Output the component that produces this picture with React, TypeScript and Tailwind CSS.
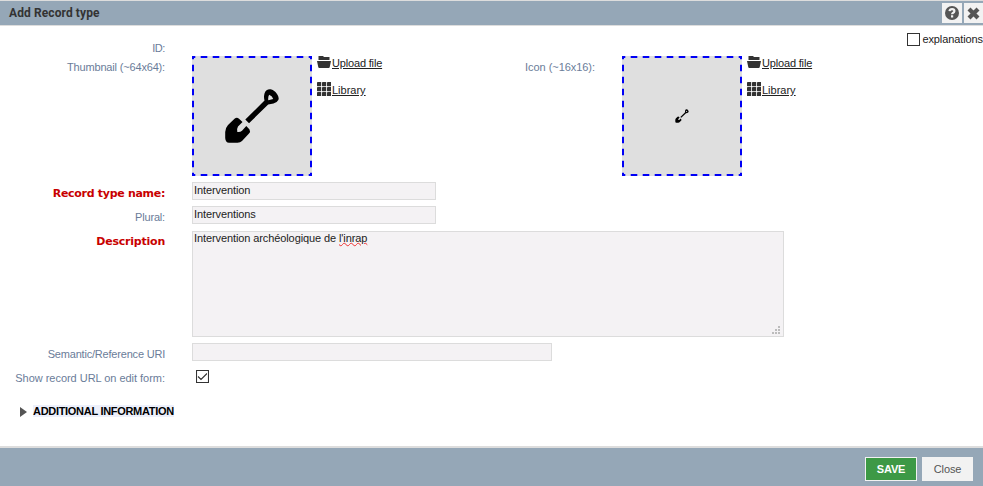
import type { ReactNode } from "react";

function Shovel({ size }: { size: number }) {
  return (
    <svg width={size} height={size} viewBox="0 0 64 64" fill="#000">
      <path fillRule="evenodd" d="M25.300 35.500 44.500 16.600Q43.500 13 44.500 9.500 46 5 50.500 5.300 54 5.800 57 10 59.500 13.500 58.300 16 57 18.800 53.500 19.500L48.200 20.500 29 39.200ZM48.300 16.300 53.200 15Q52.500 12 49.200 10.800 47.800 13 48.300 16.300Z" />
      <path d="M5.200 54V48Q5.300 44 8 41L14.500 34.700Q16.800 32.800 19 34.700L22.500 38 18 42.500Q16.500 45 17.300 48 20 48.500 22 46.800L26.300 42 29.500 45.500Q30.700 47.500 29 49.500L22 57Q20.300 58.700 17.500 58.700H9Q5.500 58.700 5.200 54Z" />
    </svg>
  );
}

function Folder() {
  return (
    <svg className="h-3 w-[14px]" viewBox="0 0 14 12" fill="#333">
      <path d="M1.500 4V0H6L7 1H12.500V4ZM0 5H14L12.700 11.200Q12.500 12 11.700 12H2.300Q1.500 12 1.300 11.200Z" />
    </svg>
  );
}

function Grid() {
  return (
    <svg className="h-[14px] w-[14px]" viewBox="0 0 14 14" fill="#333">
      {[0, 5, 10].map((y) => [0, 5, 10].map((x) => <rect key={`${x}-${y}`} x={x} y={y} width="4.200" height="4.200" rx=".4" />))}
    </svg>
  );
}

function Picker({ size }: { size: number }) {
  return (
    <div className="flex">
      <div className="relative flex h-[120px] w-[120px] items-center justify-center bg-[#dfdfdf]">
        <svg className="absolute inset-0" width="120" height="120">
          <path d="M0 1H120M0 119H120M1 0V120M119 0V120" fill="none" stroke="#0000f5" strokeWidth="2" strokeDasharray="6.6 5.4" strokeDashoffset="3.3" />
        </svg>
        <Shovel size={size} />
      </div>
      <div className="ml-[5px] text-[#222]">
        <div className="flex h-[26px] items-start"><Folder /><span className="ml-[1px] leading-[14px] tracking-[-0.17px] underline">Upload file</span></div>
        <div className="flex items-start"><Grid /><span className="ml-[1px] mt-[1px] leading-[14px] underline">Library</span></div>
      </div>
    </div>
  );
}

function Label({ children, tracking = "tracking-[-0.17px]", required = false }: { children: ReactNode; tracking?: string; required?: boolean }) {
  return (
    <div className={`mr-[27px] w-[165px] shrink-0 whitespace-nowrap text-right leading-[22px] ${tracking} ${required ? "font-['DejaVu_Sans',sans-serif] text-[11px] font-bold text-[#c80000]" : "text-[#6a7c99]"}`}>
      {children}
    </div>
  );
}

export default function App() {
  return (
    <div className="flex h-[486px] w-[983px] flex-col overflow-hidden bg-white font-['Liberation_Sans',Arial,sans-serif] text-[11px] text-[#222]">
      <header className="flex h-[26px] shrink-0 items-center border-y border-[#dddddd] bg-[#95a7b7] pl-[9px]">
        <h1 className="grow font-[Roboto,sans-serif] text-[12px] font-bold leading-4 tracking-[0.1px] text-[#333]">Add Record type</h1>
        <button className="mr-[2px] flex h-5 w-5 items-center justify-center bg-[#f2f2f2]">
          <svg width="14" height="14" viewBox="0 0 14 14"><circle cx="7" cy="7" r="7" fill="#555" /><path d="M4.500 5.200Q4.800 3.100 7.100 3.100 9.400 3.100 9.400 5 9.400 6.200 7.900 6.900 7.100 7.300 7.100 8.300M7.100 9.300V11.500" stroke="#f2f2f2" strokeWidth="2.200" fill="none" /></svg>
        </button>
        <button className="flex h-5 w-[19px] items-center justify-center bg-[#f2f2f2]">
          <svg width="13" height="13" viewBox="0 0 13 13"><path d="m2 2 9 9m0-9-9 9" stroke="#555" strokeWidth="4.200" /></svg>
        </button>
      </header>

      <main className="flex grow flex-col">
        <div className="flex h-[30px] shrink-0">
          <div className="mt-[11px]"><Label tracking="tracking-[-0.4px]">ID:</Label></div>
          <div className="ml-auto mt-[7px] flex h-[13px] items-center">
            <span className="mr-[2px] h-[13px] w-[13px] border border-[#333]" />
            <span className="tracking-[-0.1px]">explanations</span>
          </div>
        </div>
        <div className="flex h-[126px] shrink-0">
          <Label>Thumbnail (~64x64):</Label>
          <Picker size={64} />
          <div className="ml-auto mr-[27px] leading-[22px] tracking-[-0.05px] text-[#6a7c99]">Icon (~16x16):</div>
          <div className="w-[361px]"><Picker size={16} /></div>
        </div>
        <div className="flex h-6 shrink-0">
          <Label required tracking="tracking-[-0.3px]"><span className="relative top-px">Record type name:</span></Label>
          <div className="h-[18px] w-[244px] border border-[#dcdcdc] bg-[#f4f2f4] pl-[1px] leading-[15px] tracking-[-0.1px]">Intervention</div>
        </div>
        <div className="flex h-[25px] shrink-0">
          <Label>Plural:</Label>
          <div className="h-[18px] w-[244px] border border-[#dcdcdc] bg-[#f4f2f4] pl-[1px] leading-[15px] tracking-[-0.1px]">Interventions</div>
        </div>
        <div className="flex h-[112px] shrink-0">
          <Label required tracking="tracking-[-0.22px]">Description</Label>
          <div className="flex h-[106px] w-[592px] justify-between border border-[#dcdcdc] bg-[#f4f2f4] pl-[1px] leading-[13px] tracking-[-0.1px]">
            <span>Intervention archéologique de <span className="underline decoration-[#e33] decoration-wavy decoration-[0.5px] underline-offset-0">l'inrap</span></span>
            <svg className="mb-[2px] mr-[3px] self-end" width="8" height="8" fill="#bcbcbc"><path d="M6 0h2v2H6zM3 3h2v2H3zm3 0h2v2H6zM0 6h2v2H0zm3 0h2v2H3zm3 0h2v2H6z" /></svg>
          </div>
        </div>
        <div className="flex h-6 shrink-0">
          <Label tracking="tracking-[-0.2px]">Semantic/Reference URI</Label>
          <div className="h-[18px] w-[360px] border border-[#dcdcdc] bg-[#f4f2f4]" />
        </div>
        <div className="flex h-9 shrink-0">
          <Label tracking="tracking-[-0.03px]">Show record URL on edit form:</Label>
          <svg className="ml-1 mt-[3px]" width="13" height="13"><path d="M.5.5h12v12H.5zM2 6.500 5 9.500 11 3.500" fill="none" stroke="#333" strokeWidth="1.100" /></svg>
        </div>
        <div className="flex h-4 shrink-0 items-center pl-5">
          <svg className="relative top-px" width="7" height="10" fill="#555"><path d="m0 0 7 5-7 5Z" /></svg>
          <span className="ml-[6px] bg-[#edf0fb] leading-3 font-bold tracking-[-0.3px] text-black">ADDITIONAL INFORMATION</span>
        </div>
      </main>

      <footer className="flex h-10 shrink-0 justify-end border-t-2 border-[#dddddd] bg-[#95a7b7] pr-[10px] pt-[9px]">
        <button className="mr-[5px] h-6 w-[52px] border border-[#f2f2f2] bg-[#3d9946] font-bold tracking-[-0.15px] text-white">SAVE</button>
        <button className="h-6 w-[51px] bg-[#f2f2f2] tracking-[-0.1px] text-[#555]">Close</button>
      </footer>
    </div>
  );
}
